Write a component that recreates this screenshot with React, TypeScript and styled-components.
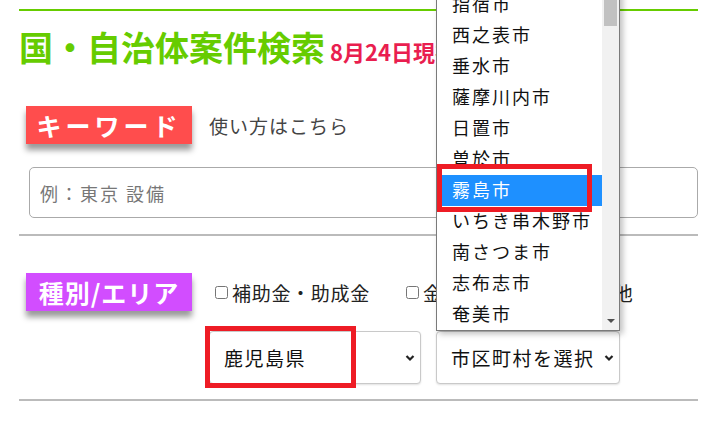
import styled, { createGlobalStyle } from 'styled-components';

const GlobalStyle = createGlobalStyle`
  html, body {
    margin: 0;
    padding: 0;
    background: #fff;
  }
  body {
    font-family: "Noto Sans CJK JP", "Noto Sans", sans-serif;
    color: #222;
  }
  input, select {
    font-family: inherit;
  }
`;

const CITIES = [
  '指宿市',
  '西之表市',
  '垂水市',
  '薩摩川内市',
  '日置市',
  '曽於市',
  '霧島市',
  'いちき串木野市',
  '南さつま市',
  '志布志市',
  '奄美市',
];

const Page = styled.main`
  box-sizing: border-box;
  width: 709px;
  height: 421px;
  padding: 9px 11px 0 19px;
  overflow: hidden;
`;

const Header = styled.header`
  border-top: 2px solid #66cc00;
  padding-top: 19px;
`;

const Title = styled.h1`
  margin: 0;
  font-size: 34px;
  line-height: 34px;
  font-weight: 700;
  color: #66cc00;
  white-space: nowrap;
`;

const DateNote = styled.span`
  margin-left: 5px;
  font-size: 22px;
  color: #e91e4f;
`;

const Section = styled.section<{ $top: number }>`
  display: grid;
  grid-template-columns: 166px 1fr;
  column-gap: 17px;
  row-gap: 20px;
  align-items: center;
  margin-top: ${p => p.$top}px;
  padding-left: 7px;
`;

/** 見出しのラベル（キーワード・種別/エリア） */
const Tag = styled.div<{ $bg: string; $spacing: number }>`
  height: 38px;
  display: flex;
  align-items: center;
  justify-content: center;
  background: ${p => p.$bg};
  color: #fff;
  font-size: 25px;
  font-weight: 700;
  line-height: 1;
  letter-spacing: ${p => p.$spacing}px;
  box-shadow: 0 6px 6px rgba(0, 0, 0, 0.4);
`;

const HowTo = styled.a`
  font-size: 19px;
  letter-spacing: 1px;
  color: #444;
  text-decoration: none;
`;

const KeywordInput = styled.input`
  grid-column: 1 / -1;
  box-sizing: border-box;
  height: 51px;
  margin-top: 3px;
  margin-left: 3px;
  padding: 0 10px;
  border: 1px solid #aaa;
  border-radius: 5px;
  font-size: 18px;
  letter-spacing: 2px;
  color: #222;
  &::placeholder {
    color: #777;
  }
`;

const Divider = styled.hr<{ $top: number }>`
  margin: ${p => p.$top}px 0 0;
  height: 0;
  border: 0;
  border-top: 2px solid #bbb;
`;

const CheckRow = styled.div`
  display: flex;
  align-items: center;
  gap: 30px;
  font-size: 19px;
  letter-spacing: 0.7px;
  white-space: nowrap;
  color: #222;
`;

const CheckLabel = styled.label`
  display: flex;
  align-items: center;
`;

const Check = styled.input`
  width: 13px;
  height: 13px;
  margin: 0 4px 0 6px;
`;

const SelectRow = styled.div`
  grid-column: 2;
  display: flex;
  gap: 15px;
`;

const SelectWrap = styled.div<{ $width: number }>`
  position: relative;
  width: ${p => p.$width}px;
  height: 53px;
`;

const SelectBox = styled.select`
  appearance: none;
  box-sizing: border-box;
  width: 100%;
  height: 100%;
  padding: 0 0 0 14px;
  border: 1px solid #c9c9c9;
  border-radius: 4px;
  background: #fff;
  box-shadow: 0 1px 2px rgba(0, 0, 0, 0.12);
  font-size: 19px;
  letter-spacing: 1.5px;
  color: #111;
`;

const Chevron = styled.svg`
  position: absolute;
  right: 6px;
  top: 50%;
  transform: translateY(-50%);
  pointer-events: none;
`;

/** 開いている市区町村のリスト */
const Dropdown = styled.div`
  position: absolute;
  left: 0;
  bottom: 100%;
  box-sizing: border-box;
  width: 100%;
  height: 343px;
  display: flex;
  border: 1px solid #7a7a7a;
  background: #fff;
  box-shadow: 3px 3px 6px rgba(0, 0, 0, 0.25);
  z-index: 5;
`;

const OptionList = styled.ul`
  flex: 1;
  margin: 0;
  padding: 0;
  list-style: none;
  display: flex;
  flex-direction: column;
  justify-content: flex-end;
`;

const Option = styled.li<{ $selected?: boolean }>`
  flex: none;
  height: 31px;
  padding: 0 0 3px 15px;
  box-sizing: border-box;
  display: flex;
  align-items: center;
  font-size: 18px;
  letter-spacing: 2px;
  white-space: nowrap;
  background: ${p => (p.$selected ? '#1e90ff' : 'transparent')};
  color: ${p => (p.$selected ? '#fff' : '#111')};
`;

const ScrollTrack = styled.div`
  position: relative;
  width: 17px;
  background: #f1f1f1;
`;

const ScrollThumb = styled.div`
  position: absolute;
  left: 2px;
  right: 2px;
  top: 10px;
  height: 27px;
  background: #c1c1c1;
`;

const ScrollArrow = styled.div`
  position: absolute;
  left: 5px;
  bottom: 7px;
  width: 0;
  height: 0;
  border-left: 4px solid transparent;
  border-right: 4px solid transparent;
  border-top: 4px solid #505050;
`;

/** 説明用の赤い枠 */
const Marker = styled.div<{ $left: number; $top: number; $w: number; $h: number }>`
  position: absolute;
  left: ${p => p.$left}px;
  top: ${p => p.$top}px;
  width: ${p => p.$w}px;
  height: ${p => p.$h}px;
  box-sizing: border-box;
  border: 5px solid #ee1c25;
  pointer-events: none;
  z-index: 6;
`;

function Arrow() {
  return (
    <Chevron width="10" height="7" viewBox="0 0 10 7">
      <path d="M1.5 1.5 L5 5 L8.5 1.5" fill="none" stroke="#222" strokeWidth="2.2" />
    </Chevron>
  );
}

export default function App() {
  return (
    <>
      <GlobalStyle />
      <Page>
        <Header>
          <Title>
            国・自治体案件検索<DateNote>8月24日現在</DateNote>
          </Title>
        </Header>

        <Section $top={38}>
          <Tag $bg="#ff4d4d" $spacing={4}>
            キーワード
          </Tag>
          <HowTo href="#">使い方はこちら</HowTo>
          <KeywordInput placeholder="例：東京 設備" />
        </Section>

        <Divider $top={16} />

        <Section $top={37}>
          <Tag $bg="#d24dff" $spacing={1}>
            種別/エリア
          </Tag>
          <CheckRow>
            {['補助金・助成金', '金融・融資', 'その他'].map(text => (
              <CheckLabel key={text}>
                <Check type="checkbox" />
                {text}
              </CheckLabel>
            ))}
          </CheckRow>
          <SelectRow>
            <SelectWrap $width={212}>
              <SelectBox defaultValue="kagoshima">
                <option value="kagoshima">鹿児島県</option>
              </SelectBox>
              <Arrow />
              <Marker $left={-4} $top={-5} $w={151} $h={62} />
            </SelectWrap>
            <SelectWrap $width={184}>
              <SelectBox defaultValue="">
                <option value="">市区町村を選択</option>
              </SelectBox>
              <Arrow />
              <Dropdown>
                <OptionList>
                  {CITIES.map(city => (
                    <Option key={city} $selected={city === '霧島市'}>
                      {city}
                    </Option>
                  ))}
                </OptionList>
                <ScrollTrack>
                  <ScrollThumb />
                  <ScrollArrow />
                </ScrollTrack>
                <Marker $left={0} $top={175} $w={155} $h={48} />
              </Dropdown>
            </SelectWrap>
          </SelectRow>
        </Section>

        <Divider $top={15} />
      </Page>
    </>
  );
}
